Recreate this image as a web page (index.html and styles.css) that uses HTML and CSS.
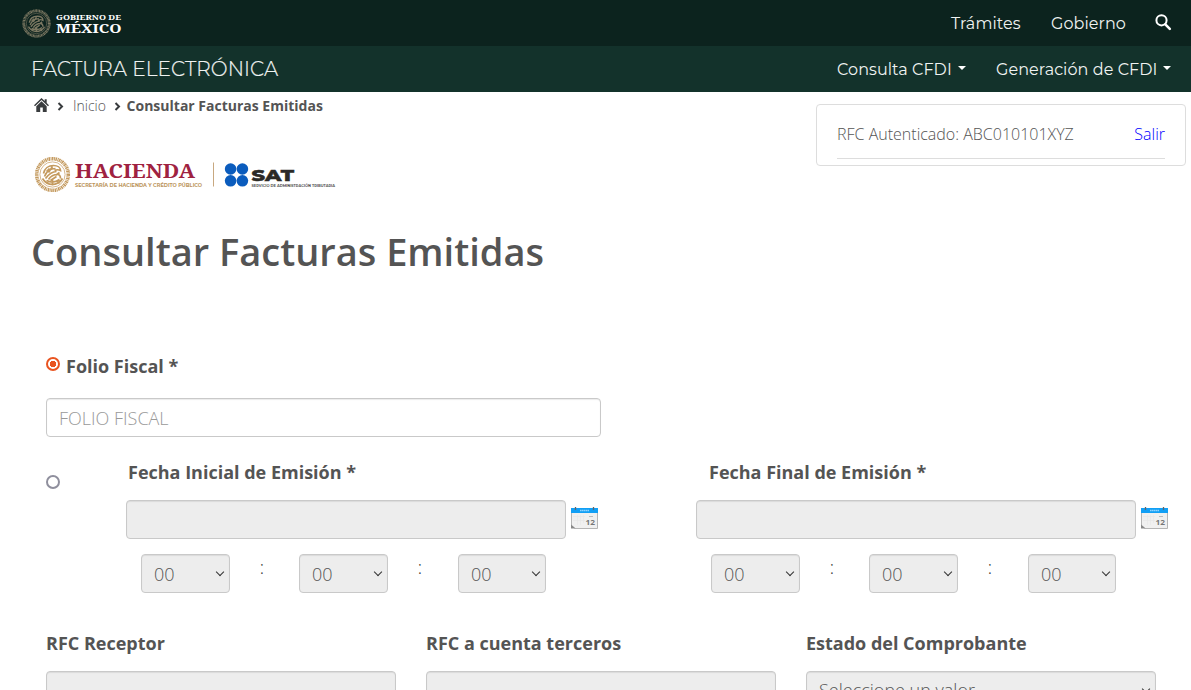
FILE: index.html
```html
<!DOCTYPE html>
<html lang="es">
<head>
<meta charset="utf-8">
<title>Consultar Facturas Emitidas</title>
<link rel="stylesheet" href="styles.css">
</head>
<body>
<svg width="0" height="0" class="defs" aria-hidden="true">
  <symbol id="seal" viewBox="0 0 36 36">
    <g fill="none" stroke="currentColor">
      <circle cx="18" cy="18" r="15.800" stroke-width="3.600" stroke-dasharray="1.500 .6 .9 .5"/>
      <circle cx="18" cy="18" r="12.600" stroke-width=".7"/>
      <path stroke-width="1.700" d="M9 17c1-5 5-8 10-8 4 0 7 2 7 5-2-1-4-1-6 0M10 20c2-5 6-8 11-8M11 22c3-4 6-7 11-7M14 23c2-3 5-5 9-5 2 0 3 2 3 4M15 12l-3 3M18 10l-4 6M22 20l-6 4M25 16l-4 3M8 22c3 5 7 6 10 6s8-2 10-6M12 24c4 2 9 2 13-1M18 23v6M14 25l-2 2M23 25l2 2"/>
    </g>
  </symbol>
  <symbol id="calendar" viewBox="0 0 27 22">
    <path d="M.5 1.5h26v20H4l-3.500-3z" fill="#f0f0f0" stroke="#b5b5b5"/>
    <path d="M0 1h27v5H0z" fill="#129ff5"/>
    <path d="M9 3.500h9" stroke="#8fd4ff" stroke-width="1.500" stroke-dasharray="1.500 .4"/>
    <path d="M4.500 0v3M22.500 0v3" stroke="#666" stroke-width="1.300"/>
    <path d="M6.500 8v10M9.500 8v10M12.500 8v8M2 9.500h12M2 13.500h12" stroke="#e6e6e6" stroke-width=".7"/>
    <path d="M0 17.500l4.500 4H0z" fill="#888"/>
    <path d="M18 9.500h4" stroke="#bbb"/>
    <text x="14.500" y="18.300" font-size="7.500" font-weight="700" textLength="9.500" lengthAdjust="spacingAndGlyphs" fill="#777">12</text>
  </symbol>
</svg>

<header>
  <nav class="topbar">
    <svg class="brand" viewBox="0 0 110 34" width="110" height="34" role="img">
      <g class="brand-seal"><use href="#seal" x="0" y="3" width="29" height="29"/></g>
      <text class="brand-text" x="34" y="13.500" font-size="7.800" textLength="65" lengthAdjust="spacingAndGlyphs">GOBIERNO DE</text>
      <text class="brand-text" x="34" y="27.300" font-size="13.200" textLength="65.500" lengthAdjust="spacingAndGlyphs">MÉXICO</text>
    </svg>
    <div class="top-links">
      <a class="link-tramites">Trámites</a>
      <a class="link-gobierno">Gobierno</a>
      <svg class="search" viewBox="0 0 17 17" width="17" height="17"><circle cx="6.500" cy="6.300" r="5.100" fill="none" stroke="#fff" stroke-width="2"/><path d="M10.300 10.300l4.500 4.500" stroke="#fff" stroke-width="2.600" stroke-linecap="round"/></svg>
    </div>
  </nav>
  <nav class="subbar">
    <span class="app-name">FACTURA ELECTRÓNICA</span>
    <div class="menus">
      <a class="menu-consulta">Consulta CFDI</a><i class="caret"></i>
      <a class="menu-generacion">Generación de CFDI</a><i class="caret"></i>
    </div>
  </nav>
</header>

<main>
  <section class="intro">
    <div>
      <div class="breadcrumb">
        <svg class="home" viewBox="0 0 15 14" width="15" height="14"><path fill="#393c3e" d="M7.500 0L0 7.200l1 1L7.500 2l6.500 6.200 1-1-2.300-2.200V1.200h-2v1.900z"/><path fill="#393c3e" d="M7.500 3.300L2.300 8.300V14h3.900V9.500h2.600V14h3.900V8.300z"/></svg>
        <svg class="chev first" viewBox="0 0 7 9" width="7" height="9"><path d="M1.500 1l3.500 3.500L1.500 8"/></svg>
        <span class="crumb">Inicio</span>
        <svg class="chev" viewBox="0 0 7 9" width="7" height="9"><path d="M1.500 1l3.500 3.500L1.500 8"/></svg>
        <b>Consultar Facturas Emitidas</b>
      </div>
      <svg class="logos" viewBox="0 0 310 46" width="310" height="46" role="img">
        <g class="hacienda-seal"><use href="#seal" x="2.500" y="4.500" width="36" height="36"/></g>
        <text x="43" y="26" class="hacienda" textLength="120" lengthAdjust="spacingAndGlyphs">HACIENDA</text>
        <text x="43" y="34.500" class="hacienda-sub" textLength="127" lengthAdjust="spacingAndGlyphs">SECRETARÍA DE HACIENDA Y CRÉDITO PÚBLICO</text>
        <path d="M181.500 10.500v24" stroke="#c8a880"/>
        <g fill="#0b5cbd"><circle cx="198.600" cy="17" r="5.800"/><circle cx="210.400" cy="17" r="5.800"/><circle cx="198.600" cy="28.800" r="5.800"/><circle cx="210.400" cy="28.800" r="5.800"/></g>
        <text x="219.500" y="28.500" class="sat" textLength="42.500" lengthAdjust="spacingAndGlyphs">SAT</text>
        <text x="219.500" y="34.500" class="sat-sub" textLength="83.500" lengthAdjust="spacingAndGlyphs">SERVICIO DE ADMINISTRACIÓN TRIBUTARIA</text>
      </svg>
    </div>
    <aside class="session">
      <div><span>RFC Autenticado: ABC010101XYZ</span><a>Salir</a></div>
    </aside>
  </section>
  <h1>Consultar Facturas Emitidas</h1>

  <form>
    <label class="folio"><i class="radio on"></i>Folio Fiscal *</label>
    <input class="control folio-input" placeholder="FOLIO FISCAL">
    <div class="dates">
      <i class="radio"></i>
      <div class="date">
        <label class="label">Fecha Inicial de Emisión *</label>
        <div class="date-row"><div class="control off"></div><svg width="27" height="22"><use href="#calendar" width="27" height="22"/></svg></div>
        <div class="times">
          <div class="control off time">00<i class="arrow"></i></div><span>:</span>
          <div class="control off time">00<i class="arrow"></i></div><span>:</span>
          <div class="control off time last">00<i class="arrow"></i></div>
        </div>
      </div>
      <div class="date end">
        <label class="label final">Fecha Final de Emisión *</label>
        <div class="date-row"><div class="control off"></div><svg width="27" height="22"><use href="#calendar" width="27" height="22"/></svg></div>
        <div class="times">
          <div class="control off time">00<i class="arrow"></i></div><span>:</span>
          <div class="control off time">00<i class="arrow"></i></div><span>:</span>
          <div class="control off time last">00<i class="arrow"></i></div>
        </div>
      </div>
    </div>
    <div class="filters">
      <div><label class="label">RFC Receptor</label><div class="control off"></div></div>
      <div><label class="label">RFC a cuenta terceros</label><div class="control off"></div></div>
      <div><label class="label">Estado del Comprobante</label><div class="control off state">Seleccione un valor...<i class="arrow"></i></div></div>
    </div>
  </form>
</main>
</body>
</html>
```
FILE: styles.css
```css
* { box-sizing: border-box; }
html, body { margin: 0; height: 100%; overflow: hidden; }
body { font: 300 18px/20px "Open Sans", sans-serif; color: #545454; background: #fff; }
.defs { display: block; width: 0; height: 0; }
svg { display: block; flex: none; }

.topbar, .subbar {
  display: flex;
  justify-content: space-between;
  align-items: center;
  height: 46px;
  font-family: Montserrat, Inter, sans-serif;
  font-weight: 400;
  font-size: 16px;
  color: #f0f3f2;
  white-space: nowrap;
}
.topbar { background: #0c231e; padding: 0 20px 0 22px; }
.subbar { background: #13322b; padding: 0 20px 0 31px; }
.brand-seal { color: #7c7862; }
.brand-text { font-family: "Noto Serif", "DejaVu Serif", serif; font-weight: 700; fill: #fff; }
.top-links, .menus { display: flex; align-items: center; }
.top-links a, .menus a { padding-top: 2px; letter-spacing: .07px; }
.top-links { margin-right: -1px; }
.link-tramites { width: 100px; }
.link-gobierno { width: 104px; }
.search { margin-top: -2px; }
.app-name { font-weight: 300; font-size: 20px; letter-spacing: .12px; -webkit-text-stroke: .2px; }
.menu-consulta { width: 121px; }
.menu-generacion { width: 167px; margin-left: 30px; }
.caret { border: 4px solid transparent; border-top-color: #fff; border-bottom: 0; margin-top: -3px; }

.intro { display: flex; justify-content: space-between; height: 134px; padding: 4px 5px 0 32px; }
.breadcrumb { display: flex; align-items: center; height: 20px; font-size: 14px; padding-left: 2px; }
.breadcrumb b { font-weight: 700; margin-left: 5px; }
.home { margin-top: -2px; }
.crumb { margin: 0 8px 0 8px; }
.chev { fill: none; stroke: #393c3e; stroke-width: 2; }
.chev.first { margin: 0 1px 0 8px; }
.chev:not(.first) { margin-right: .6px; }
.logos { margin-top: 36px; }
.hacienda-seal { color: #c49a5e; }
.hacienda { font: 700 20px "Noto Serif", "DejaVu Serif", serif; fill: #9f2241; }
.hacienda-sub { font: 700 4.800px Montserrat, "Open Sans", sans-serif; fill: #bc955c; }
.sat { font: 800 16.500px Montserrat, "Open Sans", sans-serif; fill: #2b2926; stroke: #2b2926; stroke-width: .5px; }
.sat-sub { font: 700 4px Montserrat, "Open Sans", sans-serif; fill: #555; }
.session { width: 370px; height: 62px; margin-top: 8px; padding: 0 20px; border: 1px solid #ddd; border-radius: 4px; font-size: 16px; }
.session div { display: flex; justify-content: space-between; height: 54px; padding-top: 19px; border-bottom: 1px solid #ddd; }
.session a { color: #00f; }

h1 { margin: 0 0 80px 31px; font-size: 38px; line-height: 50px; font-weight: 600; }
form { padding: 0 23px 0 46px; }
.folio { display: flex; height: 20px; font-weight: 700; }
.label { display: block; font-weight: 700; }
.radio { width: 14px; height: 14px; border: 2px solid #8f8f9d; border-radius: 50%; flex: none; }
.radio.on { margin: 1px 6px 0 0; border-color: #e95420; background: radial-gradient(circle, #e95420 3px, #fff 3.500px); }
.control {
  display: flex;
  align-items: center;
  position: relative;
  height: 39px;
  padding: 0 12px;
  border: 1px solid #c9c9c9;
  border-radius: 4px;
  background: #fff;
  box-shadow: inset 0 1px 1px rgba(0, 0, 0, .08);
  color: #555;
}
.off { background: #ededed; }
.folio-input { width: 555px; margin-top: 22px; font: inherit; }
.folio-input::placeholder { color: #999; opacity: 1; }
.dates { display: flex; margin-top: 25px; }
.dates > .radio { margin: 13px 66px 0 0; }
.date { width: 570px; flex: none; }
.date.end { width: 472px; }
.date .label { margin-left: 2px; }
.date .label.final { margin-left: 13px; }
.date-row { display: flex; gap: 4.500px; margin-top: 18px; }
.date-row .control { width: 440px; }
.date-row svg { margin-top: 7px; }
.times { display: flex; margin: 15px 0 0 15px; }
.time { width: 89px; }
.time.last { width: 88px; margin-left: 1px; }
.times span { width: 69px; padding: 3px 5px 0 0; text-align: center; color: #333; }
.arrow { position: absolute; right: 6px; top: 14px; width: 6px; height: 6px; border: solid #333; border-width: 0 1.500px 1.500px 0; transform: rotate(45deg); }
.filters { display: grid; grid-template-columns: repeat(3, 350px); gap: 30px; margin-top: 40px; }
.filters .control { margin-top: 18px; }
.filters .state { padding-bottom: 1px; }
```
